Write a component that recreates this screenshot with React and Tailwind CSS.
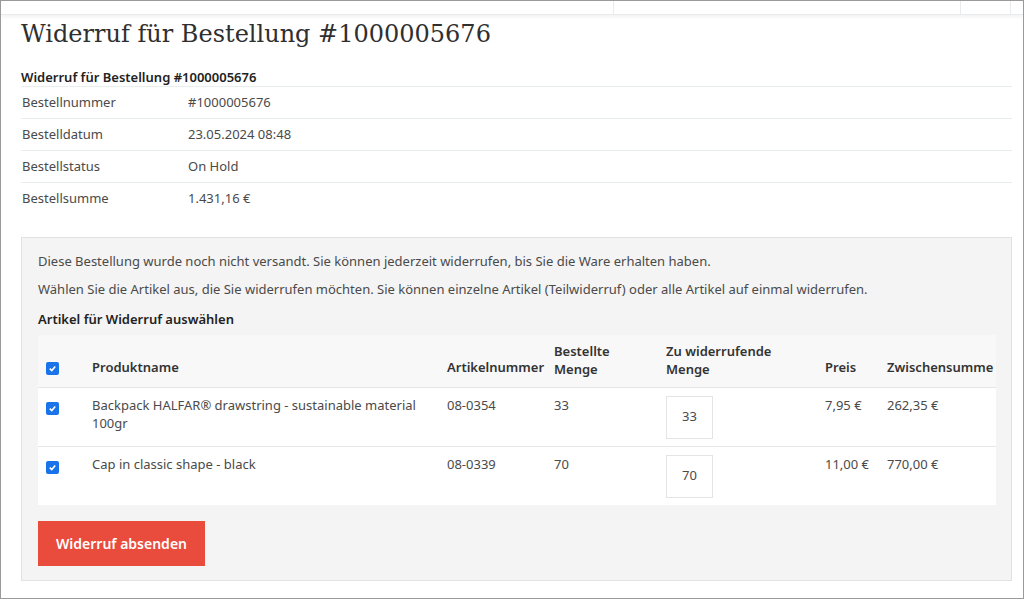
const F = { fontFamily: '"Noto Sans", "Open Sans", sans-serif' };

function Cb() {
  return (
    <span className="inline-flex w-[13px] h-[13px] rounded-[2px] bg-[#1a73e8] items-center justify-center">
      <svg width="9" height="9" viewBox="0 0 10 10"><path d="M2 5.2 L4.2 7.3 L8 2.8" stroke="white" strokeWidth="1.8" fill="none" /></svg>
    </span>
  );
}

const rows = [
  ["Bestellnummer", "#1000005676"],
  ["Bestelldatum", "23.05.2024 08:48"],
  ["Bestellstatus", "On Hold"],
  ["Bestellsumme", "1.431,16 €"],
];

const items = [
  ["Backpack HALFAR® drawstring - sustainable material 100gr", "08-0354", "33", "7,95 €", "262,35 €"],
  ["Cap in classic shape - black", "08-0339", "70", "11,00 €", "770,00 €"],
];

export default function App() {
  return (
    <div className="w-[1024px] h-[599px] overflow-hidden bg-white border border-[#9a9a9a] text-[#4a4a4a] text-[13px]" style={F}>
      <div className="h-[14px] flex border-b border-[#e8ecef] shadow-[0_2px_4px_rgba(0,0,0,0.06)]">
        <div className="w-[613px] border-r border-[#e8ecef]" />
        <div className="w-[347px] border-r border-[#e8ecef]" />
        <div className="w-[50px] border-r border-[#e8ecef]" />
      </div>
      <div className="pl-[20px] pr-[11px]">
        <h1 className="leading-[36px] mt-[1px] text-[#2f2f2f]" style={{ fontFamily: '"DejaVu Serif", serif', fontSize: '24px' }}>Widerruf für Bestellung #1000005676</h1>
        <div className="mt-[16px] font-semibold text-[#222] leading-[18px] pb-[0px] border-b border-[#e8eeee]">Widerruf für Bestellung #1000005676</div>
        {rows.map(([a, b], i) => (
          <div key={a} className={`flex h-[32px] items-center pl-[1px] ${i < 3 ? "border-b border-[#e8eeee]" : ""}`}>
            <div className="w-[166px]">{a}</div>
            <div>{b}</div>
          </div>
        ))}
        <div className="mt-[22px] bg-[#f4f4f4] border border-[#e2e2e2] px-[16px] pt-[14px] pb-[14px]">
          <p className="leading-[18px]">Diese Bestellung wurde noch nicht versandt. Sie können jederzeit widerrufen, bis Sie die Ware erhalten haben.</p>
          <p className="leading-[18px] mt-[10px]">Wählen Sie die Artikel aus, die Sie widerrufen möchten. Sie können einzelne Artikel (Teilwiderruf) oder alle Artikel auf einmal widerrufen.</p>
          <p className="leading-[18px] mt-[12px] font-semibold text-[#222]">Artikel für Widerruf auswählen</p>
          <table className="mt-[7px] w-[958px] border-collapse">
            <thead>
              <tr className="bg-[#f8f8f8] h-[52px] text-[#333] align-bottom">
                <th className="w-[54px] pl-[8px] pb-[8px] text-left"><Cb /></th>
                <th className="w-[355px] text-left font-semibold pb-[9px]">Produktname</th>
                <th className="w-[107px] text-left font-semibold pb-[9px]">Artikelnummer</th>
                <th className="w-[112px] text-left font-semibold pb-[9px] leading-[18px]">Bestellte<br />Menge</th>
                <th className="w-[159px] text-left font-semibold pb-[9px] leading-[18px]">Zu widerrufende<br />Menge</th>
                <th className="w-[62px] text-left font-semibold pb-[9px]">Preis</th>
                <th className="text-left font-semibold pb-[9px]">Zwischensumme</th>
              </tr>
            </thead>
            <tbody className="bg-white">
              {items.map((it) => (
                <tr key={it[1]} className="border-t border-[#e6e6e6] align-top h-[59px]">
                  <td className="pl-[8px] pt-[11px]"><Cb /></td>
                  <td className="pt-[8px] leading-[18px] pr-[20px]">{it[0]}</td>
                  <td className="pt-[8px]">{it[1]}</td>
                  <td className="pt-[8px]">{it[2]}</td>
                  <td className="pt-[8px]">
                    <div className="w-[47px] h-[43px] border border-[#e4e4e4] bg-white flex items-center justify-center">{it[2]}</div>
                  </td>
                  <td className="pt-[8px]">{it[3]}</td>
                  <td className="pt-[8px]">{it[4]}</td>
                </tr>
              ))}
            </tbody>
          </table>
          <button className="mt-[16px] w-[167px] h-[45px] bg-[#e94b3c] text-white font-semibold text-[14px]" style={F}>Widerruf absenden</button>
        </div>
      </div>
    </div>
  );
}
